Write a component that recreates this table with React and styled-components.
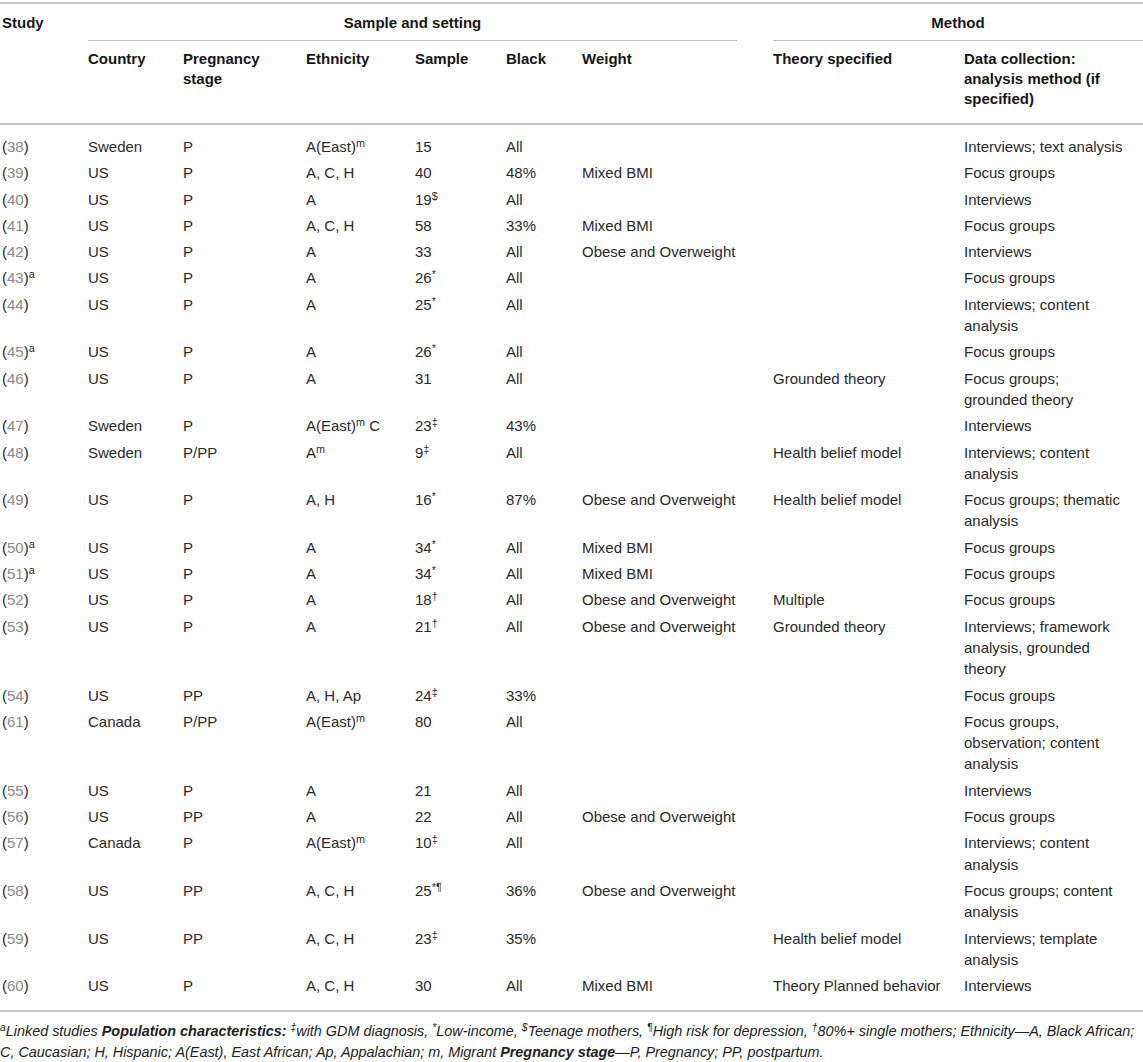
import React from "react";
import styled, { createGlobalStyle } from "styled-components";

const GlobalStyle = createGlobalStyle`
  body {
    margin: 0;
    background: #fff;
    font-family: "Liberation Sans", Arial, sans-serif;
    color: #2a2a2a;
  }
`;

const Page = styled.div`
  width: 1143px;
  padding-top: 2px;
`;

const Table = styled.table`
  width: 1143px;
  table-layout: fixed;
  border-collapse: collapse;
  border-top: 2px solid #c4c4c4;
  border-bottom: 2px solid #c4c4c4;
  font-size: 15px;
`;

const HeadRow = styled.tr`
  border-bottom: ${({ $last }) => ($last ? "2px solid #c4c4c4" : "none")};
`;

const Th = styled.th`
  text-align: left;
  vertical-align: top;
  font-weight: 700;
  color: #161616;
  line-height: 20px;
  white-space: pre;
  padding: ${({ $top }) => ($top ? "9px 0 0 0" : "8px 0 14px 0")};
  padding-left: ${({ $first }) => ($first ? "2px" : "0")};
  padding-right: ${({ $gap }) => $gap || 0}px;
`;

const GroupLabel = styled.div`
  text-align: center;
  padding-bottom: 7px;
  border-bottom: 1px solid #bdbdbd;
`;

const Td = styled.td`
  vertical-align: top;
  white-space: pre;
  line-height: 21.3px;
  padding-top: ${({ $first }) => ($first ? "11px" : "2.5px")};
  padding-bottom: ${({ $last }) => ($last ? "13.5px" : "2.5px")};
  padding-left: ${({ $lead }) => ($lead ? "2px" : "0")};
`;

const RefLink = styled.span`
  color: #8a8a8a;
`;

const Sup = styled.sup`
  font-size: 0.72em;
  line-height: 0;
  vertical-align: 0.45em;
`;

const Foot = styled.p`
  margin: 9px 0 0 0;
  font-size: 14.4px;
  line-height: 21.3px;
  font-style: italic;
  color: #222;
  b {
    font-weight: 700;
  }
`;

const widths = [88, 95, 123, 109, 91, 76, 191, 191, 179];

const s = (n, mark) => (
  <>
    {n}
    <Sup>{mark}</Sup>
  </>
);
const east = <>A(East)<Sup>m</Sup></>;

const rows = [
  ["38", "", "Sweden", "P", east, "15", "All", "", "", "Interviews; text analysis"],
  ["39", "", "US", "P", "A, C, H", "40", "48%", "Mixed BMI", "", "Focus groups"],
  ["40", "", "US", "P", "A", s("19", "$"), "All", "", "", "Interviews"],
  ["41", "", "US", "P", "A, C, H", "58", "33%", "Mixed BMI", "", "Focus groups"],
  ["42", "", "US", "P", "A", "33", "All", "Obese and Overweight", "", "Interviews"],
  ["43", "a", "US", "P", "A", s("26", "*"), "All", "", "", "Focus groups"],
  ["44", "", "US", "P", "A", s("25", "*"), "All", "", "", "Interviews; content\nanalysis"],
  ["45", "a", "US", "P", "A", s("26", "*"), "All", "", "", "Focus groups"],
  ["46", "", "US", "P", "A", "31", "All", "", "Grounded theory", "Focus groups;\ngrounded theory"],
  ["47", "", "Sweden", "P", <>A(East)<Sup>m</Sup> C</>, s("23", "‡"), "43%", "", "", "Interviews"],
  ["48", "", "Sweden", "P/PP", <>A<Sup>m</Sup></>, s("9", "‡"), "All", "", "Health belief model", "Interviews; content\nanalysis"],
  ["49", "", "US", "P", "A, H", s("16", "*"), "87%", "Obese and Overweight", "Health belief model", "Focus groups; thematic\nanalysis"],
  ["50", "a", "US", "P", "A", s("34", "*"), "All", "Mixed BMI", "", "Focus groups"],
  ["51", "a", "US", "P", "A", s("34", "*"), "All", "Mixed BMI", "", "Focus groups"],
  ["52", "", "US", "P", "A", s("18", "†"), "All", "Obese and Overweight", "Multiple", "Focus groups"],
  ["53", "", "US", "P", "A", s("21", "†"), "All", "Obese and Overweight", "Grounded theory", "Interviews; framework\nanalysis, grounded\ntheory"],
  ["54", "", "US", "PP", "A, H, Ap", s("24", "‡"), "33%", "", "", "Focus groups"],
  ["61", "", "Canada", "P/PP", east, "80", "All", "", "", "Focus groups,\nobservation; content\nanalysis"],
  ["55", "", "US", "P", "A", "21", "All", "", "", "Interviews"],
  ["56", "", "US", "PP", "A", "22", "All", "Obese and Overweight", "", "Focus groups"],
  ["57", "", "Canada", "P", east, s("10", "‡"), "All", "", "", "Interviews; content\nanalysis"],
  ["58", "", "US", "PP", "A, C, H", s("25", "*¶"), "36%", "Obese and Overweight", "", "Focus groups; content\nanalysis"],
  ["59", "", "US", "PP", "A, C, H", s("23", "‡"), "35%", "", "Health belief model", "Interviews; template\nanalysis"],
  ["60", "", "US", "P", "A, C, H", "30", "All", "Mixed BMI", "Theory Planned behavior", "Interviews"],
];

const subHeads = [
  "Country",
  "Pregnancy\nstage",
  "Ethnicity",
  "Sample",
  "Black",
  "Weight",
  "Theory specified",
  "Data collection:\nanalysis method (if\nspecified)",
];

export default function App() {
  return (
    <Page>
      <GlobalStyle />
      <Table>
        <colgroup>
          {widths.map((w, i) => (
            <col key={i} style={{ width: w }} />
          ))}
        </colgroup>
        <thead>
          <HeadRow>
            <Th $top $first rowSpan={2}>
              Study
            </Th>
            <Th $top colSpan={6} $gap={36}>
              <GroupLabel>Sample and setting</GroupLabel>
            </Th>
            <Th $top colSpan={2}>
              <GroupLabel>Method</GroupLabel>
            </Th>
          </HeadRow>
          <HeadRow $last>
            {subHeads.map((h) => (
              <Th key={h}>{h}</Th>
            ))}
          </HeadRow>
        </thead>
        <tbody>
          {rows.map(([ref, note, ...cells], r) => (
            <tr key={ref}>
              <Td $lead $first={r === 0} $last={r === rows.length - 1}>
                (<RefLink>{ref}</RefLink>){note && <Sup>{note}</Sup>}
              </Td>
              {cells.map((c, i) => (
                <Td key={i} $first={r === 0} $last={r === rows.length - 1}>
                  {c}
                </Td>
              ))}
            </tr>
          ))}
        </tbody>
      </Table>
      <Foot>
        <Sup>a</Sup>Linked studies <b>Population characteristics:</b> <Sup>‡</Sup>with GDM diagnosis,{" "}
        <Sup>*</Sup>Low-income, <Sup>$</Sup>Teenage mothers, <Sup>¶</Sup>High risk for depression,{" "}
        <Sup>†</Sup>80%+ single mothers; Ethnicity—A, Black African;
        <br />
        C, Caucasian; H, Hispanic; A(East), East African; Ap, Appalachian; m, Migrant{" "}
        <b>Pregnancy stage</b>—P, Pregnancy; PP, postpartum.
      </Foot>
    </Page>
  );
}
